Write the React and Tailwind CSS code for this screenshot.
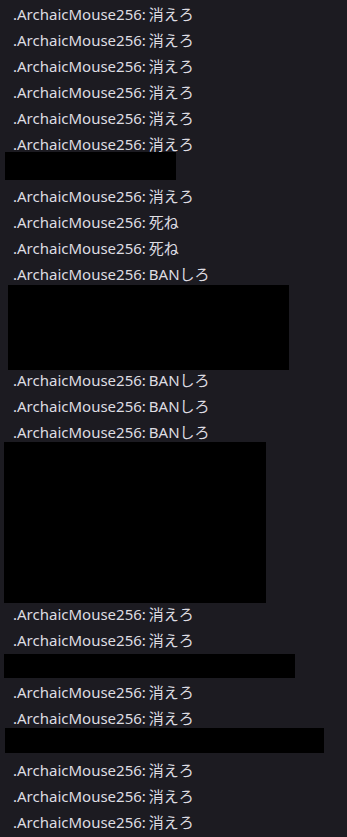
const KIE = '消えろ'
const SHINE = '死ね'
const BAN = 'BANしろ'

// each row: text line or redacted block, with its own top offset
const rows = [
  { t: KIE, mt: 4 },
  { t: KIE, mt: 6 },
  { t: KIE, mt: 6 },
  { t: KIE, mt: 6 },
  { t: KIE, mt: 6 },
  { t: KIE, mt: 6 },
  { block: 'mt-[-2px] ml-[5px] w-[171px] h-[28px]' },
  { t: KIE, mt: 6 },
  { t: SHINE, mt: 6 },
  { t: SHINE, mt: 6 },
  { t: BAN, mt: 6 },
  { block: 'mt-[1px] ml-[8px] w-[281px] h-[85px]' },
  { t: BAN, mt: 0 },
  { t: BAN, mt: 6 },
  { t: BAN, mt: 6 },
  { block: 'mt-0 ml-[4px] w-[262px] h-[161px]' },
  { t: KIE, mt: 1 },
  { t: KIE, mt: 6 },
  { block: 'mt-[4px] ml-[4px] w-[291px] h-[24px]' },
  { t: KIE, mt: 4 },
  { t: KIE, mt: 6 },
  { block: 'mt-0 ml-[5px] w-[319px] h-[25px]' },
  { t: KIE, mt: 7 },
  { t: KIE, mt: 6 },
  { t: KIE, mt: 6 },
]

const MT = { 0: 'mt-0', 1: 'mt-[1px]', 4: 'mt-[4px]', 6: 'mt-[6px]', 7: 'mt-[7px]' }

function Line({ text, mt }) {
  return (
    <div className={`${MT[mt]} h-[20px] pl-[13px] flex items-center text-[15px] leading-[20px] text-[#dedde2] whitespace-nowrap`}>
      <span>.ArchaicMouse256:</span>
      <span className="ml-[3px]">{text}</span>
    </div>
  )
}

export default function App() {
  return (
    <div
      className="w-[347px] h-[837px] overflow-hidden bg-[#1c1b21] flex flex-col"
      style={{ fontFamily: '"Noto Sans", "Noto Sans CJK JP", sans-serif' }}
    >
      {rows.map((r, i) =>
        r.block ? (
          <div key={i} className={`${r.block} bg-black shrink-0`} />
        ) : (
          <Line key={i} text={r.t} mt={r.mt} />
        )
      )}
    </div>
  )
}
